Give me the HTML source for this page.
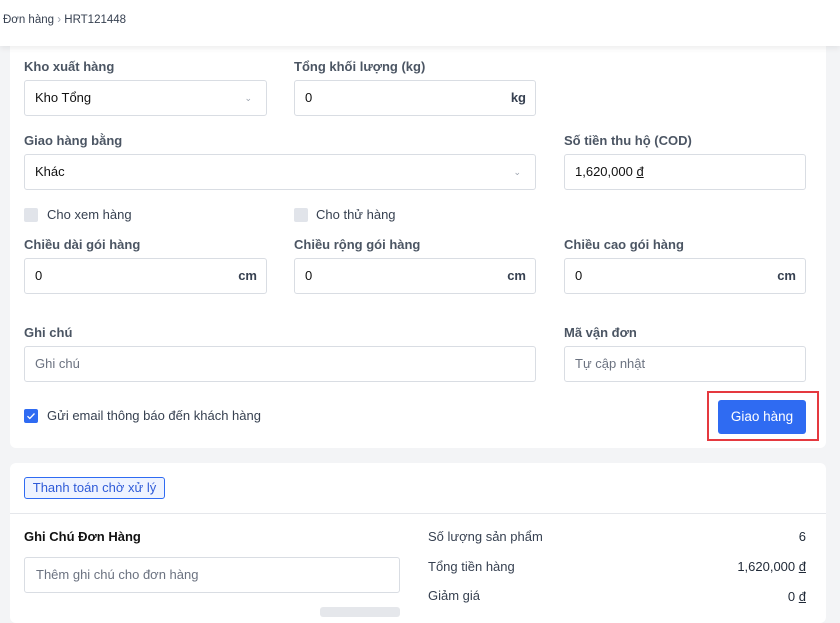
<!DOCTYPE html>
<html><head><meta charset="utf-8"><style>
*{box-sizing:border-box;margin:0;padding:0}
body{width:840px;height:614px;overflow:hidden;background:#f3f4f6;font-family:"Liberation Sans","Noto Sans CJK SC",sans-serif;font-size:13px;color:#1f2937;position:relative}
.a{position:absolute}
.hdr{left:0;top:0;width:840px;height:46px;background:#fff;box-shadow:0 2px 6px rgba(0,0,0,.08);z-index:2}
.card{background:#fff;border-radius:6px}
.lbl{font-weight:bold;color:#4b5563;font-size:13px}
.in{border:1px solid #d9dde3;border-radius:3px;background:#fff;height:36px;padding-left:10px;line-height:34px;font-size:13px;color:#111}
.ph{color:#6b7280}
.suf{position:absolute;right:9px;top:0;font-weight:bold;color:#374151}
.chev{position:absolute;right:14px;top:0;color:#9ca3af;font-size:9px}
.cb{width:14px;height:14px;background:#e1e4ea;border-radius:2px}
</style></head><body>
<div class="a hdr"><span class="a" style="left:3px;top:14px;font-size:11.5px;color:#374151">Đơn hàng <span style="color:#9ca3af">›</span> HRT121448</span></div>
<div class="a card" style="left:10px;top:30px;width:816px;height:418px"></div>
<div class="a lbl" style="left:24px;top:59px">Kho xuất hàng</div>
<div class="a lbl" style="left:294px;top:59px">Tổng khối lượng (kg)</div>
<div class="a in" style="left:24px;top:80px;width:243px">Kho Tổng<span class="chev">⌄</span></div>
<div class="a in" style="left:294px;top:80px;width:242px">0<span class="suf">kg</span></div>
<div class="a lbl" style="left:24px;top:133px">Giao hàng bằng</div>
<div class="a lbl" style="left:564px;top:133px">Số tiền thu hộ (COD)</div>
<div class="a in" style="left:24px;top:154px;width:512px">Khác<span class="chev">⌄</span></div>
<div class="a in" style="left:564px;top:154px;width:242px">1,620,000 <u>đ</u></div>
<div class="a cb" style="left:24px;top:208px"></div><div class="a" style="left:47px;top:207px;color:#374151">Cho xem hàng</div>
<div class="a cb" style="left:294px;top:208px"></div><div class="a" style="left:316px;top:207px;color:#374151">Cho thử hàng</div>
<div class="a lbl" style="left:24px;top:237px">Chiều dài gói hàng</div>
<div class="a lbl" style="left:294px;top:237px">Chiều rộng gói hàng</div>
<div class="a lbl" style="left:564px;top:237px">Chiều cao gói hàng</div>
<div class="a in" style="left:24px;top:258px;width:243px">0<span class="suf">cm</span></div>
<div class="a in" style="left:294px;top:258px;width:242px">0<span class="suf">cm</span></div>
<div class="a in" style="left:564px;top:258px;width:242px">0<span class="suf">cm</span></div>
<div class="a lbl" style="left:24px;top:325px">Ghi chú</div>
<div class="a lbl" style="left:564px;top:325px">Mã vận đơn</div>
<div class="a in ph" style="left:24px;top:346px;width:512px">Ghi chú</div>
<div class="a in ph" style="left:564px;top:346px;width:242px">Tự cập nhật</div>
<div class="a" style="left:24px;top:409px;width:14px;height:14px;background:#2f6bf2;border-radius:2px"><svg width="14" height="14"><path d="M3.5 7.2l2.3 2.3 4.7-5" stroke="#fff" stroke-width="1.3" fill="none"/></svg></div>
<div class="a" style="left:47px;top:408px;color:#374151">Gửi email thông báo đến khách hàng</div>
<div class="a" style="left:707px;top:391px;width:112px;height:50px;border:2px solid #e5393f"></div>
<div class="a" style="left:718px;top:400px;width:88px;height:34px;background:#2f6bf2;border-radius:3px;color:#fff;text-align:center;line-height:34px;font-size:13.5px">Giao hàng</div>
<div class="a card" style="left:10px;top:463px;width:816px;height:160px"></div>
<div class="a" style="left:24px;top:477px;width:141px;height:22px;border:1px solid #2f6bf2;border-radius:3px;background:#eef3ff;color:#2f5bd8;line-height:20px;text-align:center;font-size:13px">Thanh toán chờ xử lý</div>
<div class="a" style="left:10px;top:513px;width:816px;height:1px;background:#e5e7eb"></div>
<div class="a" style="left:24px;top:529px;font-weight:bold;color:#111">Ghi Chú Đơn Hàng</div>
<div class="a in ph" style="left:24px;top:557px;width:376px;padding-left:11px">Thêm ghi chú cho đơn hàng</div>
<div class="a" style="left:320px;top:607px;width:80px;height:10px;background:#e5e7eb;border-radius:3px"></div>
<div class="a" style="left:428px;top:529px;color:#374151">Số lượng sản phẩm</div><div class="a" style="right:34px;top:529px">6</div>
<div class="a" style="left:428px;top:559px;color:#374151">Tổng tiền hàng</div><div class="a" style="right:34px;top:559px">1,620,000 <u>đ</u></div>
<div class="a" style="left:428px;top:588px;color:#374151">Giảm giá</div><div class="a" style="right:34px;top:589px">0 <u>đ</u></div>
</body></html>
